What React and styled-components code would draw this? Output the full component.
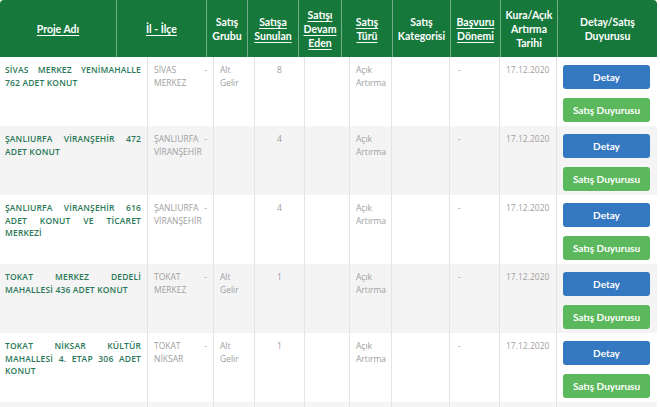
import React from "react";
import styled, { createGlobalStyle } from "styled-components";

const rows = [
  {
    name: "SİVAS MERKEZ YENİMAHALLE 762 ADET KONUT",
    place: "SİVAS - MERKEZ",
    group: "Alt Gelir",
    count: "8",
  },
  {
    name: "ŞANLIURFA VİRANŞEHİR 472 ADET KONUT",
    place: "ŞANLIURFA - VİRANŞEHİR",
    group: "",
    count: "4",
  },
  {
    name: "ŞANLIURFA VİRANŞEHİR 616 ADET KONUT VE TİCARET MERKEZİ",
    place: "ŞANLIURFA - VİRANŞEHİR",
    group: "",
    count: "4",
  },
  {
    name: "TOKAT MERKEZ DEDELİ MAHALLESİ 436 ADET KONUT",
    place: "TOKAT - MERKEZ",
    group: "Alt Gelir",
    count: "1",
  },
  {
    name: "TOKAT NİKSAR KÜLTÜR MAHALLESİ 4. ETAP 306 ADET KONUT",
    place: "TOKAT - NİKSAR",
    group: "Alt Gelir",
    count: "1",
  },
];

const headers = [
  { label: ["Proje Adı"], link: true },
  { label: ["İl - İlçe"], link: true },
  { label: ["Satış", "Grubu"] },
  { label: ["Satışa", "Sunulan"], link: true },
  { label: ["Satışı", "Devam", "Eden"], link: true },
  { label: ["Satış", "Türü"], link: true },
  { label: ["Satış", "Kategorisi"] },
  { label: ["Başvuru", "Dönemi"], link: true },
  { label: ["Kura/Açık", "Artırma", "Tarihi"] },
  { label: ["Detay/Satış", "Duyurusu"] },
];

const App = () => {
  return (
    <>
      <GlobalStyle />
      <TableFrame>
        <HeaderRow>
          {headers.map((h, i) => (
            <HeadCell key={i} $first={i === 0}>
              <HeadText $link={h.link}>
                {h.label.map((line, j) => (
                  <span key={j}>{line}</span>
                ))}
              </HeadText>
            </HeadCell>
          ))}
        </HeaderRow>
        <Body>
          {rows.map((row, i) => (
            <BodyRow key={i} $striped={i % 2 === 1}>
              <NameCell>{row.name}</NameCell>
              <Cell>{row.place}</Cell>
              <Cell>{row.group}</Cell>
              <Cell $center>{row.count}</Cell>
              <Cell />
              <Cell>Açık Artırma</Cell>
              <Cell />
              <Cell $dash>-</Cell>
              <Cell>17.12.2020</Cell>
              <ActionCell>
                <Button $kind="detail">Detay</Button>
                <Button $kind="notice">Satış Duyurusu</Button>
              </ActionCell>
            </BodyRow>
          ))}
          <BodyRow $striped>
            {Array.from({ length: 10 }).map((_, i) =>
              i === 0 ? <NameCell key={i} /> : <Cell key={i} />
            )}
          </BodyRow>
        </Body>
      </TableFrame>
    </>
  );
};

const GlobalStyle = createGlobalStyle`
  html, body {
    margin: 0;
    padding: 0;
    background: #fff;
  }
  body {
    font-family: Lato, "Open Sans", "Noto Sans", sans-serif;
    overflow: hidden;
  }
`;

const TableFrame = styled.div`
  width: 657px;
  height: 407px;
  overflow: hidden;
  background: #fff;
`;

const HeaderRow = styled.div`
  display: grid;
  grid-template-columns: 116px 90px 41px 51px 43px 51px 58px 50px 57px 1fr;
  height: 57px;
  background: #17783c;
  border-radius: 4px 4px 0 0;
`;

const HeadCell = styled.div`
  display: flex;
  align-items: center;
  justify-content: center;
  border-left: ${(props) =>
    props.$first ? "none" : "1px solid rgba(255, 255, 255, 0.4)"};
`;

const HeadText = styled.div`
  display: flex;
  flex-direction: column;
  align-items: center;
  color: #fff;
  font-size: 10.5px;
  font-weight: 700;
  line-height: 14px;
  text-align: center;

  span {
    text-decoration: ${(props) => (props.$link ? "underline" : "none")};
    text-underline-offset: 2px;
  }
`;

const Body = styled.div`
  display: flex;
  flex-direction: column;
`;

const BodyRow = styled.div`
  display: grid;
  grid-template-columns: 147px 66px 41px 50px 45px 42px 58px 50px 57px 1fr;
  height: 69px;
  flex-shrink: 0;
  background: ${(props) => (props.$striped ? "#f4f4f4" : "#fff")};
`;

const Cell = styled.div`
  padding: 7px 6px 0;
  border-left: 1px solid #e4e4e4;
  color: #a0a0a0;
  font-family: "Open Sans", Lato, sans-serif;
  font-size: 8.5px;
  line-height: 12.5px;
  text-align: ${(props) => (props.$center ? "center" : "justify")};
  padding-left: ${(props) => (props.$dash ? "8px" : "6px")};
`;

const NameCell = styled.div`
  padding: 7px 6px 0 5px;
  color: #2b7858;
  font-family: "Open Sans", Lato, sans-serif;
  font-size: 8.5px;
  font-weight: 600;
  letter-spacing: 0.15px;
  line-height: 12.5px;
  text-align: justify;
  text-transform: uppercase;
`;

const ActionCell = styled.div`
  display: flex;
  flex-direction: column;
  gap: 9px;
  padding: 8px 7px 0 6px;
  border-left: 1px solid #e4e4e4;
`;

const Button = styled.div`
  height: 24px;
  display: flex;
  align-items: center;
  justify-content: center;
  border-radius: 3px;
  color: #fff;
  font-size: 10px;
  font-weight: 700;
  background: ${(props) => (props.$kind === "detail" ? "#3478c1" : "#5cb85c")};
`;

export default App;
